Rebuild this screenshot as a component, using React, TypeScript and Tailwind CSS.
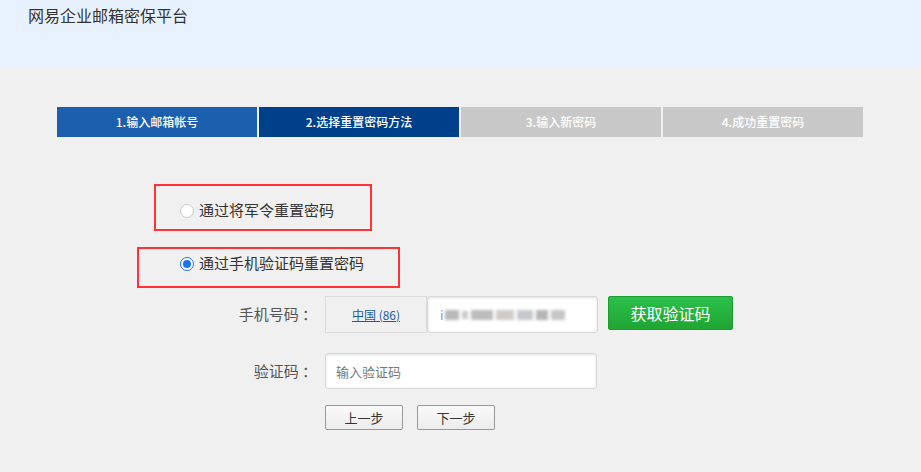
import React, { useState } from 'react';

const steps = ['1.输入邮箱帐号', '2.选择重置密码方法', '3.输入新密码', '4.成功重置密码'];

export default function App() {
  const [method, setMethod] = useState('phone');

  return (
    <div
      className="w-[921px] h-[472px] bg-[#f0f0f0] text-[#333] overflow-hidden"
      style={{ fontFamily: '"Microsoft YaHei", "Noto Sans CJK SC", "Liberation Sans", sans-serif' }}
    >
      {/* Header */}
      <div className="h-[67px] bg-[#e8f2fe] pl-[28px] pt-[3px]">
        <h1 className="text-[16px] leading-[24px] text-[#333]">网易企业邮箱密保平台</h1>
      </div>

      {/* Steps */}
      <div className="flex gap-[2px] ml-[57px] mt-[40px]">
        {steps.map((s, i) => (
          <div
            key={s}
            className={`w-[200px] h-[30px] flex items-center justify-center text-[12px] font-medium text-white ${
              i === 0 ? 'bg-[#1c5fae]' : i === 1 ? 'bg-[#00408a]' : 'bg-[#c8c8c8]'
            }`}
          >
            {s}
          </div>
        ))}
      </div>

      {/* Methods */}
      <div className="mt-[47px] ml-[154px] w-[218px] h-[47px] border-2 border-[#ff3333] flex items-center pl-[24px] pt-[6px]">
        <label className="flex items-center gap-[5px] text-[15px] text-[#333] cursor-pointer" onClick={() => setMethod('token')}>
          <span
            className={`w-[14px] h-[14px] rounded-full border flex items-center justify-center bg-white ${
              method === 'token' ? 'border-[#1a73e8]' : 'border-[#c8c8c8]'
            }`}
          >
            {method === 'token' && <span className="w-[8px] h-[8px] rounded-full bg-[#1a73e8]" />}
          </span>
          通过将军令重置密码
        </label>
      </div>

      <div className="mt-[16px] ml-[137px] w-[263px] h-[41px] border-2 border-[#ff3333] flex items-center pl-[41px] pb-[8px]">
        <label className="flex items-center gap-[5px] text-[15px] text-[#333] cursor-pointer" onClick={() => setMethod('phone')}>
          <span
            className={`w-[14px] h-[14px] rounded-full border flex items-center justify-center bg-white ${
              method === 'phone' ? 'border-[#1a73e8]' : 'border-[#c8c8c8]'
            }`}
          >
            {method === 'phone' && <span className="w-[8px] h-[8px] rounded-full bg-[#1a73e8]" />}
          </span>
          通过手机验证码重置密码
        </label>
      </div>

      {/* Phone row */}
      <div className="flex items-start mt-[8px]">
        <div className="w-[325px] pr-[8px] h-[37px] flex items-center justify-end text-[15px] text-[#555]">手机号码 ：</div>
        <div className="w-[102px] h-[37px] border border-[#dcdcdc] bg-[#f0f0f0] flex items-center justify-center">
          <a href="#" className="text-[12px] text-[#1a5aa8] underline">中国 (86)</a>
        </div>
        <div className="w-[171px] h-[37px] bg-white border border-[#d8d8d8] rounded-[3px] shadow-[inset_0_1px_3px_rgba(0,0,0,0.12)] flex items-center pl-[12px] overflow-hidden whitespace-nowrap">
          <span className="text-[13px] text-[#999] mr-[1px]">i</span>
          <span className="flex items-center gap-[3px] blur-[1.5px]">
            <span className="w-[14px] h-[10px] bg-[#b8b8b8]" />
            <span className="w-[6px] h-[8px] bg-[#c8c8c8]" />
            <span className="w-[22px] h-[10px] bg-[#bcbcbc]" />
            <span className="w-[18px] h-[10px] bg-[#cfcac6]" />
            <span className="w-[16px] h-[10px] bg-[#c4c8cc]" />
            <span className="w-[12px] h-[10px] bg-[#b5b5b5]" />
            <span className="w-[14px] h-[10px] bg-[#c6c6c6]" />
          </span>
        </div>
        <button className="ml-[10px] w-[125px] h-[34px] bg-gradient-to-b from-[#2cc04a] to-[#1fa532] border border-[#1e9a31] rounded-[2px] text-white text-[16px]">
          获取验证码
        </button>
      </div>

      {/* Code row */}
      <div className="flex items-start mt-[20px]">
        <div className="w-[325px] pr-[8px] h-[36px] flex items-center justify-end text-[15px] text-[#555]">验证码 ：</div>
        <input
          placeholder="输入验证码"
          className="w-[272px] h-[36px] bg-white border border-[#d8d8d8] rounded-[3px] shadow-[inset_0_1px_3px_rgba(0,0,0,0.12)] pl-[10px] text-[13px] outline-none placeholder:text-[#777]"
        />
      </div>

      {/* Buttons */}
      <div className="flex gap-[14px] ml-[325px] mt-[16px]">
        <button className="w-[78px] h-[25px] border border-[#999] rounded-[2px] bg-gradient-to-b from-[#fafafa] to-[#ececec] text-[13px] text-[#333]">上一步</button>
        <button className="w-[78px] h-[25px] border border-[#999] rounded-[2px] bg-gradient-to-b from-[#fafafa] to-[#ececec] text-[13px] text-[#333]">下一步</button>
      </div>
    </div>
  );
}
